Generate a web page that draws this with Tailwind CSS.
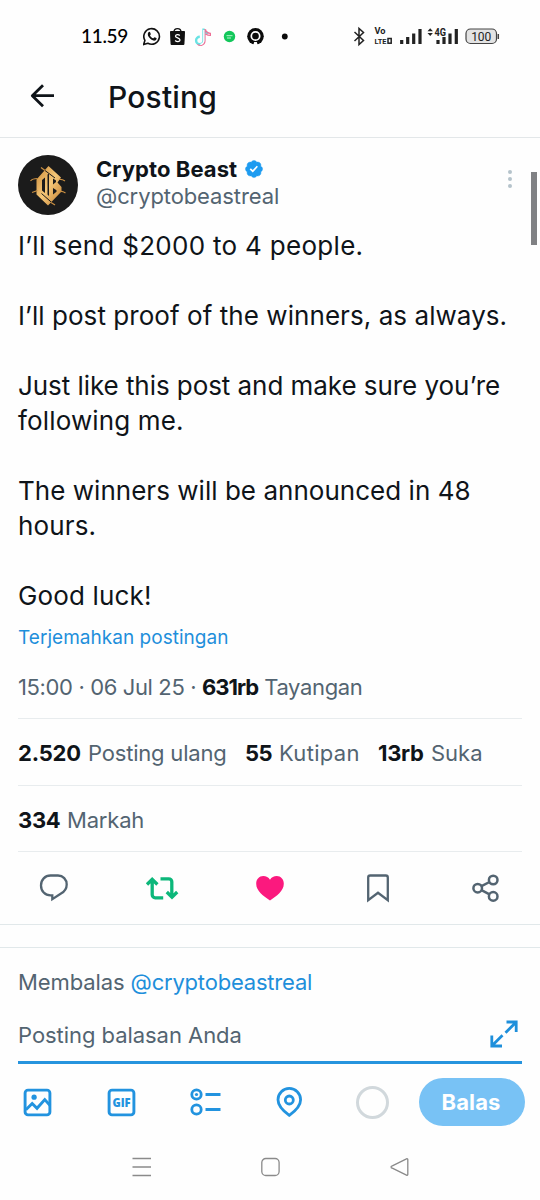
<!DOCTYPE html>
<html lang="id">
<head>
<meta charset="utf-8">
<title>Posting</title>
<script src="https://cdn.jsdelivr.net/npm/@tailwindcss/browser@4"></script>
</head>
<body class="bg-white">
<div class="relative flex h-[1200px] w-[540px] flex-col overflow-hidden bg-[#fefefe] font-['Inter',sans-serif] text-[#0f1419]">

  <!-- status bar -->
  <div class="flex h-[72px] shrink-0 items-center pl-[81px]">
    <span class="w-[62px] whitespace-nowrap font-['Lato',sans-serif] text-[19px] font-medium leading-6 tracking-[-0.3px] text-black">11.59</span>
    <svg width="150" height="24" viewBox="143 24 150 24" fill="none">
      <path d="M143.600 44.600l1.300-4.200a7.800 7.800 0 1 1 3 2.900z" stroke="#111" stroke-width="1.600" stroke-linejoin="round"/>
      <path d="M148.300 32.400c.6-.8 1.500-.8 1.800-.1l.7 1.600c.1.500-.8 1.300-.8 1.500.7 1.500 1.800 2.400 3.200 2.900.4 0 1-1.200 1.400-1.100l1.800.9c.7.400-.1 2-1.200 2.400-2.500.9-7.400-3-7.400-6.300 0-.7.200-1.300.5-1.800z" fill="#111"/>
      <path d="M170.500 31.500h14l-.6 13h-12.800z" fill="#111" stroke="#111" stroke-linejoin="round"/>
      <path d="M174 32c0-4.500 7-4.500 7 0" stroke="#111" stroke-width="1.300"/>
      <path d="M179.800 35.400c-1.300-1.100-4.300-1-4.300.8 0 2 4.500 1.500 4.500 3.700 0 2-3.200 2.100-4.900.6" stroke="#fff" stroke-width="1.300"/>
      <path d="M203.500 28.500v12a3.700 3.700 0 1 1-3.700-3.700M203.500 29c.4 2.400 2.200 3.900 4.600 4" stroke="#69e3e4" stroke-width="2.400"/>
      <path d="M205 29v12a4.600 4.600 0 0 1-7.500 3.400M205.500 29.500c.5 2.300 2.400 3.700 4.900 3.800v2.200c-2 0-3.500-.6-4.700-1.500" stroke="#ee6f96" stroke-width="1.200"/>
      <path d="M203.800 30v11a4 4 0 0 1-3.500 3.500" stroke="#fff" stroke-width="1.300"/>
      <circle cx="229.500" cy="36.500" r="5.700" fill="#13c75b"/>
      <path d="M226.500 35.700h6M227 38h4" stroke="#b4f5cb" stroke-width="1"/>
      <circle cx="255.500" cy="36.300" r="8.300" fill="#0b0b0b"/>
      <circle cx="255.500" cy="36" r="4.200" stroke="#fff" stroke-width="1.700"/>
      <path d="M253.300 45.500l.8-3.500h2.800l.8 3.500z" fill="#fff"/>
      <circle cx="284.800" cy="36.500" r="2.900" fill="#0b0b0b"/>
    </svg>
    <svg class="ml-[59px]" width="150" height="24" viewBox="352 24 150 24" fill="none" font-family="Roboto, sans-serif">
      <path d="M354.500 32l9 8.500-4.500 4V28.500l4.500 4-9 8.500" stroke="#222" stroke-width="1.500"/>
      <text x="374.500" y="34.300" font-size="8.500" font-weight="700" fill="#222" textLength="11" lengthAdjust="spacingAndGlyphs">Vo</text>
      <text x="374.500" y="44" font-size="8" font-weight="700" fill="#222" textLength="12" lengthAdjust="spacingAndGlyphs">LTE</text>
      <rect x="388" y="38.500" width="3.200" height="4.700" stroke="#222" stroke-width="1.500"/>
      <path d="M401.700 40v4M407.700 37v7M413.700 33.500v10.500M420 29v15M438 40v4M444 37v7M450 33.500v10.500M456.300 29v15" stroke="#222" stroke-width="3.200"/>
      <path d="M427.500 31.200l2.700-3 2.700 3zM427.500 33l2.700 3 2.700-3z" fill="#222"/>
      <text x="434.500" y="36.300" font-size="11.500" font-weight="700" fill="#222" stroke="#fefefe" stroke-width="1.500" paint-order="stroke" textLength="11.500" lengthAdjust="spacingAndGlyphs">4G</text>
      <rect x="466" y="29" width="30.500" height="14.500" rx="4.500" fill="#e3e3e3" stroke="#444" stroke-width="1.200"/>
      <path d="M498.300 34v5" stroke="#444" stroke-width="1.500"/>
      <text x="471.200" y="40.500" font-size="12" font-weight="400" fill="#222" textLength="20">100</text>
    </svg>
  </div>

  <!-- title bar -->
  <header class="flex h-[66px] shrink-0 items-start border-b border-[#e3e7e9] pl-[30px]">
    <svg class="mt-[11px]" width="26" height="26" viewBox="0 0 26 26" fill="none" stroke="#0f1419" stroke-width="2.800" stroke-linejoin="round"><path d="M24 12.700H2M13 2.200L2.300 12.700 13 23.200"/></svg>
    <h1 class="ml-[52px] mt-[5px] whitespace-nowrap text-[30px] font-medium leading-10 tracking-[0.2px]">Posting</h1>
  </header>

  <!-- post author -->
  <div class="flex h-[90px] shrink-0 pl-[18px] pt-[17px]">
    <svg width="60" height="60" viewBox="0 0 60 60">
      <defs><linearGradient id="gold" x1="0" y1="0" x2="1" y2="1"><stop offset="0" stop-color="#c98a38"/><stop offset=".5" stop-color="#f5c778"/><stop offset="1" stop-color="#c07c2e"/></linearGradient></defs>
      <circle cx="30" cy="30" r="30" fill="#1b1b1b"/>
      <path fill="url(#gold)" d="M30.500 11L43 22.500l-3.500 5 4 4.500v4.500L30 50.500 18.500 39.500V24.500z"/>
      <path fill="#1b1b1b" d="M24 25l3-2.500V38l-3-2.500zM29.500 19.500l1.500-1V41l-1.500-1.500zM35 23.500l3 2v1.500l-3 2.500zM35 33l3.500 2.200v1.500L35 39.500z"/>
      <path fill="none" stroke="#1b1b1b" stroke-width="1" d="M25 14l12 9M23.500 38.500l12.500 11"/>
      <path fill="none" stroke="#c98f42" stroke-width="1.200" d="M12.500 26c2-2.500 4-2.500 7-2.500M41 24.500c3-.5 4.500.5 6 1.500M14 37.500l5.500-2M42 36.500c2.500-.5 4 .5 5.500 1.500M23 12.500l4 3M33 47.500l4 2.500"/>
    </svg>
    <div class="ml-[18px] flex flex-col">
      <div class="flex items-center gap-[7px] whitespace-nowrap text-[22px] font-bold leading-7"><span class="tracking-[0.08px]">Crypto Beast</span>
        <svg width="20" height="20" viewBox="0 0 22 22"><path fill="#1d9bf0" stroke="#1d9bf0" stroke-width=".5" d="M20.396 11c-.018-.646-.215-1.275-.57-1.816-.354-.54-.852-.972-1.438-1.246.223-.607.270-1.264.140-1.897-.131-.634-.437-1.218-.882-1.687-.470-.445-1.053-.750-1.687-.882-.633-.130-1.290-.083-1.897.140-.273-.587-.704-1.086-1.245-1.440S11.647 1.620 11 1.604c-.646.017-1.273.213-1.813.568s-.969.854-1.240 1.440c-.608-.223-1.267-.272-1.902-.140-.635.130-1.220.436-1.690.882-.445.470-.749 1.055-.878 1.688-.130.633-.080 1.290.144 1.896-.587.274-1.087.705-1.443 1.245-.356.540-.555 1.170-.574 1.817.020.647.218 1.276.574 1.817.356.540.856.972 1.443 1.245-.224.606-.274 1.263-.144 1.896.130.634.433 1.218.877 1.688.470.443 1.054.747 1.687.878.633.132 1.290.084 1.897-.136.274.586.705 1.084 1.246 1.439.540.354 1.170.551 1.816.569.647-.016 1.276-.213 1.817-.567s.972-.854 1.245-1.440c.604.239 1.266.296 1.903.164.636-.132 1.220-.447 1.680-.907.460-.460.776-1.044.908-1.681s.075-1.299-.165-1.903c.586-.274 1.084-.705 1.439-1.246.354-.540.551-1.170.569-1.816z"/><path fill="#fff" d="M9.662 14.850l-3.429-3.428 1.293-1.302 2.072 2.072 4.400-4.794 1.347 1.246z"/></svg>
      </div>
      <div class="whitespace-nowrap text-[22px] leading-[26px] tracking-[-0.1px] text-[#536471]">@cryptobeastreal</div>
    </div>
    <svg class="ml-auto mr-[27px] mt-[13px]" width="6" height="22" viewBox="0 0 6 22" fill="#b5c3cb"><circle cx="3" cy="4" r="2"/><circle cx="3" cy="11" r="2"/><circle cx="3" cy="18" r="2"/></svg>
  </div>

  <!-- post body -->
  <div class="h-[385px] shrink-0 whitespace-nowrap pl-[18px] text-[26px] leading-[35px]">
    <p class="mb-[35px] tracking-[0.3px]">I’ll send $2000 to 4 people.</p>
    <p class="mb-[35px] tracking-[0.06px]">I’ll post proof of the winners, as always.</p>
    <p class="mb-[35px] tracking-[-0.06px]">Just like this post and make sure you’re<br><span class="tracking-[0.15px]">following me.</span></p>
    <p class="mb-[35px] tracking-[0.03px]">The winners will be announced in 48<br><span class="tracking-[0.15px]">hours.</span></p>
    <p class="tracking-[0.15px]">Good luck!</p>
  </div>
  <a class="mt-[11px] h-[27px] shrink-0 pl-[18px] text-[19px] leading-7 tracking-[0.03px] text-[#1e8fdb]">Terjemahkan postingan</a>
  <div class="mx-[18px] flex h-[68px] shrink-0 items-center whitespace-pre border-b border-[#e8ecee] pt-[5px] text-[22px] leading-7 text-[#536471]"><span class="tracking-[-0.37px]">15:00 · 06 Jul 25 · </span><b class="tracking-[-1px] text-[#0f1419]">631rb</b><span class="ml-[6px] tracking-[-0.35px]">Tayangan</span></div>

  <!-- counters -->
  <div class="mx-[18px] flex h-[67px] shrink-0 items-center whitespace-nowrap border-b border-[#e8ecee] pt-[1px] text-[22px] leading-7 text-[#536471]">
    <b class="w-[70px] tracking-[-0.2px] text-[#0f1419]">2.520</b><span class="w-[157px] tracking-[-0.2px]">Posting ulang</span>
    <b class="w-[34px] tracking-[-0.5px] text-[#0f1419]">55</b><span class="w-[99px] tracking-[0.3px]">Kutipan</span>
    <b class="w-[53px] tracking-[-0.3px] text-[#0f1419]">13rb</b><span>Suka</span>
  </div>
  <div class="mx-[18px] flex h-[66px] shrink-0 items-center whitespace-nowrap border-b border-[#e8ecee] pt-[3px] text-[22px] leading-7 text-[#536471]">
    <b class="w-[49px] tracking-[-0.3px] text-[#0f1419]">334</b><span class="tracking-[-0.2px]">Markah</span>
  </div>

  <!-- actions -->
  <div class="grid h-[73px] shrink-0 grid-cols-5 items-center justify-items-center border-b border-[#e1e8ea]">
    <svg width="32" height="32" viewBox="0 0 32 32" fill="none" stroke="#536471" stroke-width="2.300"><path d="M12.500 3.500h7.500c5 0 8.700 3.900 8.700 9 0 4-2.200 7.100-5.700 9.100L14.300 27.200V23.300h-1.800C7 23.300 3 19 3 13.400s4-9.900 9.500-9.900z"/></svg>
    <svg width="34" height="32" viewBox="0 0 34 32" fill="none" stroke="#0cb77a" stroke-width="3.300"><path d="M2 12.500L7.200 7.300l5.200 5.200M7.200 8v14.800a3 3 0 0 0 3 3h8M15.500 6.800h8.300a3 3 0 0 1 3 3V24M21.800 20l5.200 5.200 5.200-5.200"/></svg>
    <svg width="32" height="32" viewBox="0 0 32 32" fill="#fb197e"><path d="M16 28.500C9.500 24 2.200 19 2.200 11.700c0-4.300 3.100-7.600 7-7.600 3 0 5.300 1.300 6.800 3.700 1.500-2.400 3.800-3.700 6.800-3.700 3.900 0 7 3.300 7 7.600C29.800 19 22.500 24 16 28.500z"/></svg>
    <svg width="32" height="32" viewBox="0 0 32 32" fill="none" stroke="#536471" stroke-width="2.300"><path d="M6.200 28.200V5.500a2 2 0 0 1 2-2h15.600a2 2 0 0 1 2 2v22.700L16 20.800z"/></svg>
    <svg width="32" height="32" viewBox="0 0 32 32" fill="none" stroke="#536471" stroke-width="2.500"><circle cx="7.700" cy="16.200" r="4.300"/><circle cx="23.200" cy="8" r="4.300"/><circle cx="23.200" cy="24.400" r="4.300"/><path d="M11.500 14.200l8-4.200M11.500 18.200l8 4.200"/></svg>
  </div>
  <div class="h-[23px] shrink-0 border-b border-[#e1e8ea]"></div>

  <!-- reply composer -->
  <div class="mx-[18px] h-[63px] shrink-0 whitespace-nowrap pt-5 text-[22px] leading-7 tracking-[-0.1px] text-[#536471]">Membalas <span class="tracking-[-0.2px] text-[#1e8fdb]">@cryptobeastreal</span></div>
  <div class="mx-[18px] flex h-[53px] shrink-0 items-start justify-between border-b-3 border-[#2694de] pt-[7px] text-[22px] leading-7 text-[#536471]">
    <span class="mt-[3px] whitespace-nowrap tracking-[-0.05px]">Posting balasan Anda</span>
    <svg class="mr-1 mt-[2px]" width="28" height="28" viewBox="0 0 28 28" fill="none" stroke="#1e8fdb" stroke-width="2.800"><path d="M16.500 2H26.200V12M26 2.200L15.500 12.700M1.800 15.500V26H12M2 25.800l10.500-10.500"/></svg>
  </div>
  <div class="flex h-[78px] shrink-0 items-center pb-[2px] pl-[22px]">
    <svg width="31" height="31" viewBox="0 0 32 32" fill="none" stroke="#2293df" stroke-width="3"><rect x="3.200" y="3.200" width="25.600" height="25.600" rx="3"/><path d="M4 23.500l6.500-6.500 5 5 8-9 5.500 6"/><circle cx="12.500" cy="10.500" r="2.700" fill="#2293df" stroke="none"/></svg>
    <svg class="ml-[53px]" width="31" height="31" viewBox="0 0 32 32" fill="none"><rect x="3.200" y="3.200" width="25.600" height="25.600" rx="3" stroke="#2293df" stroke-width="3"/><text x="6.600" y="20.200" font-family="Open Sans, sans-serif" font-size="12" font-weight="800" fill="#2293df" textLength="18.800" lengthAdjust="spacingAndGlyphs">GIF</text></svg>
    <svg class="ml-[52px]" width="34" height="32" viewBox="0 0 34 32" fill="none" stroke="#2293df" stroke-width="2.800"><circle cx="7.500" cy="8.500" r="4.700"/><circle cx="7.500" cy="8.500" r="1.600" fill="#2293df" stroke="none"/><circle cx="7.500" cy="23.500" r="4.700"/><path d="M16.500 8.500H31.500M16.500 23.500H31.500"/></svg>
    <svg class="ml-[49px]" width="34" height="34" viewBox="0 0 34 34" fill="none" stroke="#2293df" stroke-width="2.800"><path d="M17.300 30.300C12 26.500 6 21 6 14.700a11.300 11.300 0 0 1 22.600 0C28.600 21 22.600 26.500 17.300 30.300z"/><circle cx="17.300" cy="15" r="4"/></svg>
    <div class="ml-[50px] size-[33px] rounded-full border-3 border-[#d1d8dc]"></div>
    <button class="ml-[30px] flex h-12 w-[106px] items-center justify-center rounded-full bg-[#78c2f5] pr-[2px] text-[22px] font-bold leading-7 tracking-[0.1px] text-white">Balas</button>
  </div>

  <!-- system navigation -->
  <div class="flex h-[52px] shrink-0 items-center pb-[2px] pl-[132px]">
    <svg width="20" height="20" viewBox="0 0 20 20" fill="none" stroke="#8a8a8a" stroke-width="1.400"><path d="M.5 1.500h18.500M.5 10h18.500M.5 18.500h18.500"/></svg>
    <svg class="ml-[108px]" width="20" height="20" viewBox="0 0 20 20" fill="none" stroke="#8a8a8a" stroke-width="1.300"><rect x="1.800" y="1.500" width="17.300" height="17" rx="4"/></svg>
    <svg class="ml-[110px]" width="20" height="20" viewBox="0 0 20 20" fill="none" stroke="#8a8a8a" stroke-width="1.300" stroke-linejoin="round"><path d="M16.500 1.800L2.300 8.800a1.200 1.200 0 0 0 0 2.400L16.500 18.200a.9.900 0 0 0 1.300-.8V2.600A.9.900 0 0 0 16.500 1.800z"/></svg>
  </div>

  <!-- scrollbar -->
  <div class="absolute left-[531px] top-[172px] h-[73px] w-[6px] bg-[#808184]"></div>
</div>
</body>
</html>
